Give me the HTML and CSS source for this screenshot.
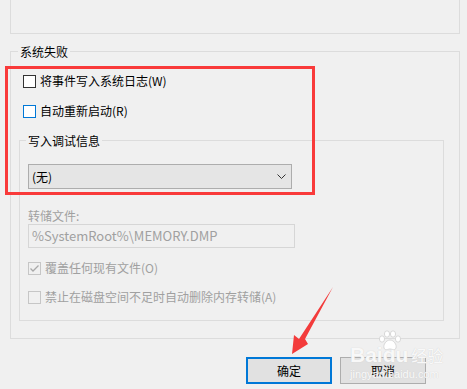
FILE: index.html
```html
<!DOCTYPE html>
<html lang="zh-CN">
<head>
  <meta charset="UTF-8" />
  <title>系统失败</title>
  <link rel="stylesheet" href="styles.css">
</head>
<body>
  <div class="dialog">
    <!-- 上一组（只露出底部） -->
    <div class="top-box"></div>

    <!-- 系统失败 -->
    <div class="group outer">
      <div class="group-title">系统失败</div>

      <label class="check-row first">
        <span class="box"></span>
        将事件写入系统日志(W)
      </label>
      <label class="check-row second">
        <span class="box focus"></span>
        自动重新启动(R)
      </label>

      <div class="group inner">
        <div class="group-title">写入调试信息</div>

        <div class="select">
          <span>(无)</span>
          <svg width="9" height="5" viewBox="0 0 9 5"><path d="M0.5 0.5 L4.5 4.5 L8.5 0.5" fill="none" stroke="#333" stroke-width="1"/></svg>
        </div>

        <div class="field-label">转储文件:</div>
        <div class="text-input">%SystemRoot%\MEMORY.DMP</div>

        <label class="check-row disabled third">
          <span class="box">
            <svg width="11" height="11" viewBox="0 0 11 11"><path d="M1.5 5.5 L4 8 L9.5 2.5" fill="none" stroke="#a8a8a8" stroke-width="1.3"/></svg>
          </span>
          覆盖任何现有文件(O)
        </label>
        <label class="check-row disabled fourth">
          <span class="box"></span>
          禁止在磁盘空间不足时自动删除内存转储(A)
        </label>
      </div>
    </div>

    <div class="buttons">
      <button class="btn default">确定</button>
      <button class="btn">取消</button>
    </div>
  </div>

  <!-- 标注：红框和箭头 -->
  <div class="highlight"></div>
  <svg class="arrow" width="467" height="389" viewBox="0 0 467 389">
    <polygon points="333,287 305,339 308,344 292,354 294,335 299,339" fill="#f33b3b"/>
  </svg>

  <!-- 水印 -->
  <div class="watermark">
    <svg class="paw" width="24" height="22" viewBox="0 0 24 22">
      <g fill="#fff" stroke="#d8d8d8" stroke-width="1">
        <ellipse cx="4" cy="9" rx="2.6" ry="3.2"/>
        <ellipse cx="9" cy="4" rx="2.6" ry="3.2"/>
        <ellipse cx="15" cy="4" rx="2.6" ry="3.2"/>
        <ellipse cx="20" cy="9" rx="2.6" ry="3.2"/>
        <path d="M12 10 C8 10 5 15 6 18 C7 21 10 19 12 19 C14 19 17 21 18 18 C19 15 16 10 12 10 Z"/>
      </g>
    </svg>
    <div class="wm-main"><span class="wm-latin">Baidu</span><span class="wm-cn">经验</span></div>
    <div class="wm-sub">jingyan.baidu.com</div>
  </div>
</body>
</html>
```

FILE: styles.css
```css
body {
  margin: 0;
  background-color: #f0f0f0;
  font-family: "Noto Sans CJK SC", "Noto Sans", sans-serif;
  font-size: 12px;
  color: #000;
  position: relative;
  width: 467px;
  height: 389px;
  overflow: hidden;
}

.top-box {
  margin-left: 10px;
  width: 448px;
  height: 33px;
  border: 1px solid #dcdcdc;
  border-top: none;
}

.group {
  border: 1px solid #dcdcdc;
}
.group-title {
  width: fit-content;
  margin-top: -8px;
  padding: 0 2px;
  line-height: 16px;
  background-color: #f0f0f0;
}

.outer {
  margin: 17px 0 0 10px;
  width: 448px;
}
.outer > .group-title {
  margin-left: 7px;
}

.inner {
  margin: 19px 15px 17px 8px;
  padding: 0 0 13px 8px;
}
.inner > .group-title {
  margin-left: -2px;
}

.check-row {
  display: flex;
  align-items: center;
  gap: 4px;
  height: 20px;
  line-height: 20px;
  white-space: nowrap;
}
.check-row.first {
  margin: 11px 0 0 12px;
}
.check-row.second {
  margin: 10px 0 0 12px;
}
.check-row.third {
  margin-top: 10px;
}
.check-row.fourth {
  margin-top: 9px;
}

.box {
  width: 11px;
  height: 11px;
  border: 1px solid #333;
  background-color: #fff;
  display: flex;
  align-items: center;
  justify-content: center;
}
.box.focus {
  border-color: #0078d7;
}
.disabled {
  color: #a0a0a0;
}
.disabled .box {
  border-color: #c6c6c6;
  background-color: #f0f0f0;
}

.select {
  margin-top: 15px;
  height: 23px;
  border: 1px solid #adadad;
  background-color: #e5e5e5;
  display: flex;
  align-items: center;
  justify-content: space-between;
  padding: 0 0 0 3px;
  width: 259px;
}
.select svg {
  margin-right: 5px;
}

.field-label {
  margin-top: 19px;
  line-height: 16px;
  color: #a0a0a0;
}
.text-input {
  width: 262px;
  height: 22px;
  line-height: 22px;
  padding-left: 3px;
  border: 1px solid #d6d6d6;
  color: #a0a0a0;
  font-size: 13px;
}

.buttons {
  display: flex;
  justify-content: flex-end;
  gap: 8px;
  margin: 18px 41px 0 0;
}
.btn {
  width: 86px;
  height: 27px;
  font-family: inherit;
  font-size: 12px;
  color: #000;
  background-color: #e1e1e1;
  border: 1px solid #adadad;
  border-radius: 0;
  padding: 0;
}
.btn.default {
  border: 2px solid #0078d7;
}

.highlight {
  position: absolute;
  left: 5px;
  top: 66px;
  width: 304px;
  height: 123px;
  border: 3px solid #f93a3a;
}
.arrow {
  position: absolute;
  left: 0;
  top: 0;
}

.watermark {
  position: absolute;
  left: 350px;
  top: 330px;
  width: 90px;
  color: rgba(255, 255, 255, 0.9);
  text-shadow: 0 0 1px #c8c8c8;
}
.paw {
  position: absolute;
  left: 28px;
  top: 0;
}
.wm-main {
  margin-top: 14px;
  line-height: 22px;
  white-space: nowrap;
}
.wm-latin {
  font-family: "Liberation Sans", sans-serif;
  font-size: 21px;
  font-weight: bold;
}
.wm-cn {
  font-size: 16px;
  margin-left: 3px;
}
.wm-sub {
  font-family: "Liberation Sans", sans-serif;
  font-size: 11px;
  line-height: 12px;
  white-space: nowrap;
}
```
